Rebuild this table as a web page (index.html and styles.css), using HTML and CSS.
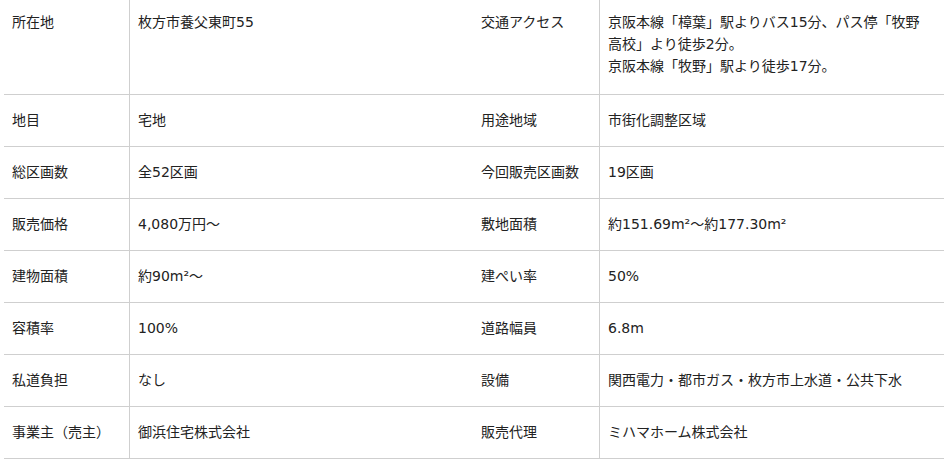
FILE: index.html
```html
<!DOCTYPE html>
<html lang="ja">
<head>
<meta charset="utf-8">
<title>物件概要</title>
<link rel="stylesheet" href="styles.css">
</head>
<body>
<div class="wrap">
<table class="spec">
  <colgroup>
    <col class="c-label1">
    <col class="c-value1">
    <col class="c-label2">
    <col class="c-value2">
  </colgroup>
  <tbody>
    <tr class="first">
      <th>所在地</th><td>枚方市養父東町55</td>
      <th>交通アクセス</th><td class="access">京阪本線「樟葉」駅よりバス15分、パス停「牧野高校」より徒歩2分。<br>京阪本線「牧野」駅より徒歩17分。</td>
    </tr>
    <tr>
      <th>地目</th><td>宅地</td>
      <th>用途地域</th><td>市街化調整区域</td>
    </tr>
    <tr>
      <th>総区画数</th><td>全52区画</td>
      <th>今回販売区画数</th><td>19区画</td>
    </tr>
    <tr>
      <th>販売価格</th><td>4,080万円〜</td>
      <th>敷地面積</th><td>約151.69m²〜約177.30m²</td>
    </tr>
    <tr>
      <th>建物面積</th><td>約90m²〜</td>
      <th>建ぺい率</th><td>50%</td>
    </tr>
    <tr>
      <th>容積率</th><td>100%</td>
      <th>道路幅員</th><td>6.8m</td>
    </tr>
    <tr>
      <th>私道負担</th><td>なし</td>
      <th>設備</th><td>関西電力・都市ガス・枚方市上水道・公共下水</td>
    </tr>
    <tr>
      <th>事業主（売主）</th><td>御浜住宅株式会社</td>
      <th>販売代理</th><td>ミハマホーム株式会社</td>
    </tr>
  </tbody>
</table>
</div>
</body>
</html>
```

FILE: styles.css
```css
html, body {
  margin: 0;
  padding: 0;
  background: #fff;
}

.wrap {
  padding: 0 6px 0 4px;
}

.spec {
  width: 940px;
  table-layout: fixed;
  border-collapse: separate;
  border-spacing: 0;
  font-family: "DejaVu Sans", "Noto Sans CJK JP", sans-serif;
  font-size: 14px;
  line-height: 22px;
  color: #222;
}

.c-label1 { width: 126px; }
.c-value1 { width: 343px; }
.c-label2 { width: 127px; }
.c-value2 { width: 344px; }

.spec th,
.spec td {
  box-sizing: border-box;
  padding: 14px 8px 15px;
  text-align: left;
  font-weight: normal;
  vertical-align: top;
  border-bottom: 1px solid #cfcfcf;
}

.spec th {
  border-right: 1px solid #cfcfcf;
}

.spec td.access {
  padding-right: 18px;
}

.spec tr.first th,
.spec tr.first td {
  padding-top: 11px;
  padding-bottom: 17px;
}
```
